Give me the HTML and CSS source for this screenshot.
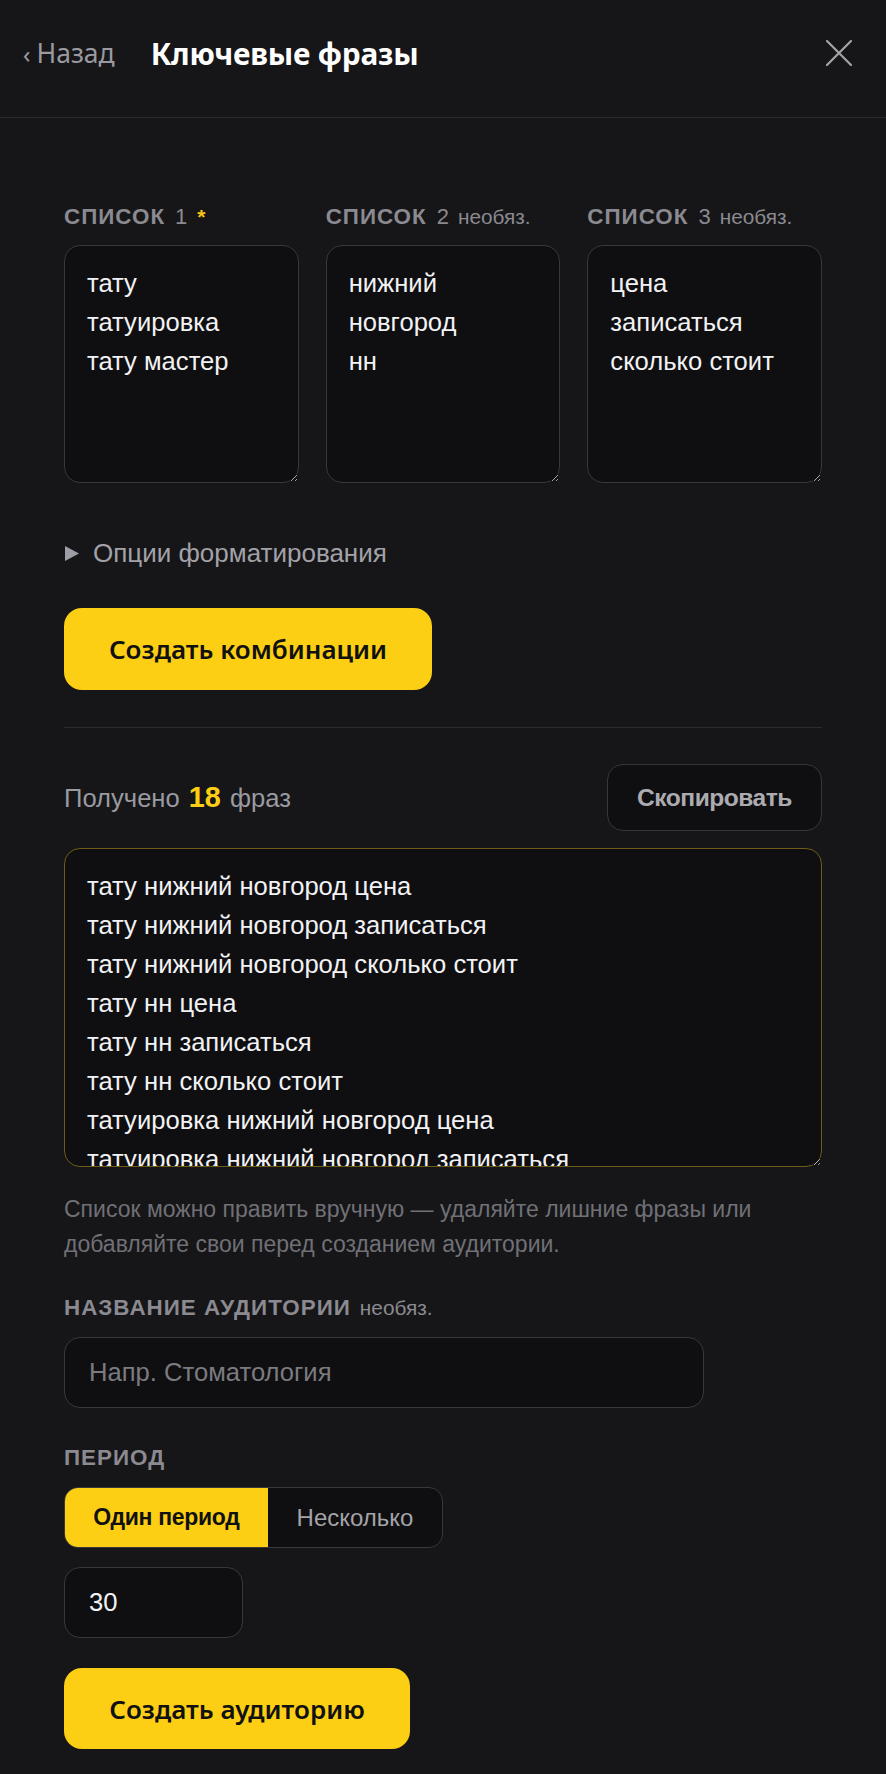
FILE: index.html
```html
<!DOCTYPE html>
<html lang="ru">
<head>
<meta charset="utf-8">
<title>Ключевые фразы</title>
<link rel="stylesheet" href="styles.css">
</head>
<body>
<header class="topbar">
  <a class="back" href="#"><span class="back-chev">‹</span><span class="back-text">Назад</span></a>
  <h1 class="title">Ключевые фразы</h1>
  <button class="close" aria-label="Закрыть">
    <svg width="28" height="28" viewBox="0 0 28 28"><path d="M2 2 L26 26 M26 2 L2 26" stroke="#a3a3a8" stroke-width="2.2" fill="none" stroke-linecap="round"/></svg>
  </button>
</header>

<main class="content">
  <section class="lists">
    <div class="list-col">
      <div class="label"><span class="label-main">Список</span><span class="label-num">1</span><span class="req">*</span></div>
      <textarea class="field list-area">тату
татуировка
тату мастер</textarea>
    </div>
    <div class="list-col">
      <div class="label"><span class="label-main">Список</span><span class="label-num">2</span><span class="opt">необяз.</span></div>
      <textarea class="field list-area">нижний новгород
нн</textarea>
    </div>
    <div class="list-col">
      <div class="label"><span class="label-main">Список</span><span class="label-num">3</span><span class="opt">необяз.</span></div>
      <textarea class="field list-area">цена
записаться
сколько стоит</textarea>
    </div>
  </section>

  <details class="options">
    <summary><svg class="tri" width="14" height="15" viewBox="0 0 14 15"><polygon points="0,0 14,7.5 0,15" fill="#9d9da6"/></svg><span>Опции форматирования</span></summary>
  </details>

  <button class="btn-primary btn-combine">Создать комбинации</button>

  <hr class="divider">

  <div class="result-head">
    <div class="result-count">Получено <b class="num">18</b> фраз</div>
    <button class="btn-copy">Скопировать</button>
  </div>

  <textarea class="field result-area">тату нижний новгород цена
тату нижний новгород записаться
тату нижний новгород сколько стоит
тату нн цена
тату нн записаться
тату нн сколько стоит
татуировка нижний новгород цена
татуировка нижний новгород записаться
татуировка нижний новгород сколько стоит
татуировка нн цена
татуировка нн записаться
татуировка нн сколько стоит
тату мастер нижний новгород цена
тату мастер нижний новгород записаться
тату мастер нижний новгород сколько стоит
тату мастер нн цена
тату мастер нн записаться
тату мастер нн сколько стоит</textarea>

  <p class="hint">Список можно править вручную — удаляйте лишние фразы или добавляйте свои перед созданием аудитории.</p>

  <div class="label label-name"><span class="label-main">Название аудитории</span><span class="opt">необяз.</span></div>
  <input class="field text-input" type="text" placeholder="Напр. Стоматология">

  <div class="label label-period"><span class="label-main">Период</span></div>
  <div class="segmented">
    <button class="seg seg-active">Один период</button>
    <button class="seg seg-other">Несколько</button>
  </div>

  <input class="field num-input" type="text" value="30">

  <button class="btn-primary btn-audience">Создать аудиторию</button>
</main>
</body>
</html>
```
FILE: styles.css
```css
* { box-sizing: border-box; }

html, body {
  margin: 0;
  padding: 0;
  background: #161618;
}

body {
  font-family: "Liberation Sans", Arial, sans-serif;
  color: #f0f0f2;
  width: 886px;
  min-height: 1774px;
}

/* ---------- header ---------- */
.topbar {
  height: 118px;
  border-bottom: 1px solid #2b2b2e;
  display: flex;
  align-items: center;
  padding: 0 33px 11px 23px;
}

.back {
  display: flex;
  align-items: center;
  gap: 6px;
  color: #9a9aa0;
  text-decoration: none;
  font-family: "Noto Sans", sans-serif;
}

.back-chev {
  font-size: 24px;
  line-height: 1;
  position: relative;
  top: 1px;
}

.back-text {
  font-size: 26.5px;
  line-height: 1;
}

.title {
  margin: 0 0 0 36px;
  font-family: "Noto Sans", sans-serif;
  font-weight: 700;
  font-size: 29.8px;
  letter-spacing: -0.2px;
  color: #ffffff;
}

.close {
  margin-left: auto;
  background: none;
  border: 0;
  padding: 0;
  width: 28px;
  height: 28px;
  display: flex;
}

/* ---------- content ---------- */
.content {
  padding: 86px 64px 25px;
  display: flex;
  flex-direction: column;
  align-items: flex-start;
}

.lists {
  width: 100%;
  display: grid;
  grid-template-columns: repeat(3, 1fr);
  gap: 27px;
}

.list-col {
  display: flex;
  flex-direction: column;
}

.label {
  height: 26px;
  display: flex;
  align-items: baseline;
  color: #8a8a90;
  line-height: 26px;
  white-space: nowrap;
}

.label-main {
  font-size: 22.4px;
  font-weight: 700;
  text-transform: uppercase;
  letter-spacing: 1px;
}

.label-num {
  font-size: 22px;
  margin-left: 10px;
}

.req {
  font-size: 21px;
  font-weight: 700;
  color: #f5c518;
  margin-left: 10px;
}

.opt {
  font-size: 20.8px;
  margin-left: 9px;
}

.field {
  background: #0f0f11;
  border: 1px solid #38383b;
  border-radius: 16px;
  color: #f2f2f4;
  font-family: "Liberation Sans", Arial, sans-serif;
  font-size: 25.6px;
  outline: none;
  color-scheme: dark;
}

textarea.field {
  line-height: 39px;
  padding: 18px 22px;
  overflow: hidden;
  resize: vertical;
}

.list-area {
  margin-top: 15px;
  width: 100%;
  height: 238px;
}

.options {
  margin-top: 55px;
}

.options summary {
  list-style: none;
  display: flex;
  align-items: center;
  gap: 14px;
  height: 30px;
  padding-left: 1px;
  color: #a2a2a8;
  font-size: 26px;
  cursor: pointer;
}

.options summary::-webkit-details-marker { display: none; }

.btn-primary {
  background: #fccf14;
  color: #111111;
  border: 0;
  border-radius: 18px;
  font-family: "Noto Sans", sans-serif;
  font-weight: 600;
  font-size: 26px;
  padding: 0 44px;
  cursor: pointer;
}

.btn-combine {
  margin-top: 40px;
  height: 82px;
  width: 368px;
}

.divider {
  margin: 37px 0 0;
  width: 100%;
  height: 1px;
  border: 0;
  background: #2c2c2f;
}

.result-head {
  margin-top: 36px;
  width: 100%;
  display: flex;
  align-items: center;
  justify-content: space-between;
}

.result-count {
  font-size: 25.6px;
  color: #9a9aa0;
}

.result-count .num {
  color: #fccf14;
  font-size: 28.8px;
  margin: 0 2px;
}

.btn-copy {
  height: 67px;
  width: 215px;
  background: #0f0f11;
  border: 1px solid #37373a;
  border-radius: 16px;
  color: #ababb0;
  font-family: "Liberation Sans", Arial, sans-serif;
  font-weight: 700;
  font-size: 24.6px;
  letter-spacing: -0.5px;
  cursor: pointer;
}

.result-area {
  margin-top: 17px;
  width: 100%;
  height: 319px;
  border-color: #6e5c18;
  padding-top: 19px;
}

.hint {
  margin: 25px 0 0;
  font-size: 23px;
  line-height: 35px;
  color: #707076;
  max-width: 740px;
}

.label-name {
  margin-top: 33px;
}

.text-input {
  margin-top: 16px;
  width: 640px;
  height: 71px;
  padding: 0 24px;
}

.text-input::placeholder {
  color: #7b7b80;
}

.label-period {
  margin-top: 37px;
}

.segmented {
  margin-top: 16px;
  display: flex;
  height: 61px;
  border: 1px solid #38383b;
  border-radius: 14px;
  background: #0f0f11;
  overflow: hidden;
}

.seg {
  border: 0;
  background: transparent;
  font-family: "Liberation Sans", Arial, sans-serif;
  font-size: 23px;
  padding: 0;
  color: #a3a3a8;
  cursor: pointer;
}

.seg-active {
  background: #fccf14;
  color: #111111;
  font-weight: 700;
  letter-spacing: -0.3px;
  width: 203px;
}

.seg-other {
  width: 174px;
  font-size: 24px;
}

.num-input {
  margin-top: 19px;
  width: 179px;
  height: 71px;
  padding: 0 24px;
}

.btn-audience {
  margin-top: 30px;
  height: 81px;
  width: 346px;
}
```
